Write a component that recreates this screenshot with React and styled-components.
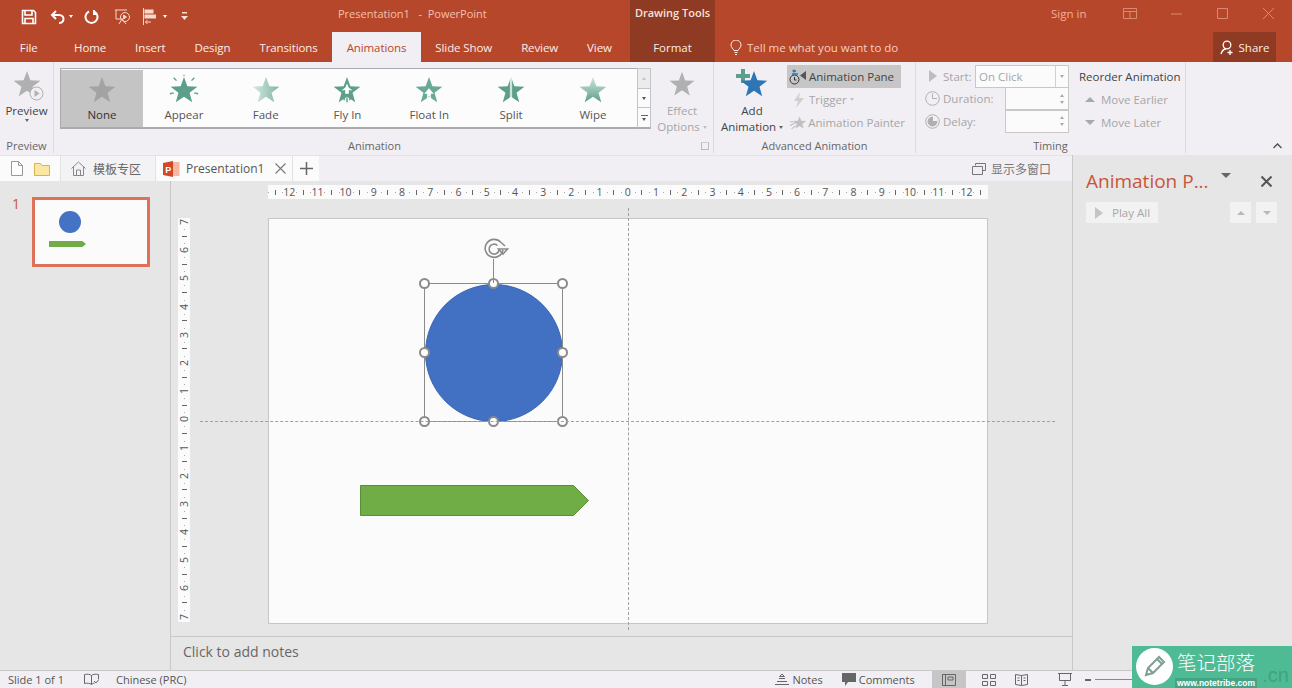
import React from 'react';
import styled, { createGlobalStyle } from 'styled-components';

const GlobalStyle = createGlobalStyle`
  html, body {
    margin: 0;
    height: 688px;
    overflow: hidden;
    background: #e6e6e6;
    font-family: "Open Sans", "Noto Sans CJK SC", sans-serif;
    font-size: 11.5px;
    color: #444;
  }
  * { box-sizing: border-box; }
`;

// star polygon used all over the ribbon
const starPoints = (cx, cy, R, r) => {
  const pts = [];
  for (let i = 0; i < 10; i++) {
    const a = -Math.PI / 2 + (i * Math.PI) / 5;
    const d = i % 2 === 0 ? R : r;
    pts.push(`${(cx + d * Math.cos(a)).toFixed(1)},${(cy + d * Math.sin(a)).toFixed(1)}`);
  }
  return pts.join(' ');
};

const Star = ({ size = 28, fill = '#a6a6a6', children, defs }) => (
  <svg width={size} height={size} viewBox="0 0 32 32">
    {defs && <defs>{defs}</defs>}
    <polygon points={starPoints(16, 17, 15, 6.2)} fill={fill} />
    {children}
  </svg>
);

const Page = styled.div`
  width: 1292px;
  height: 688px;
  position: relative;
  overflow: hidden;
  display: flex;
  flex-direction: column;
`;

/* title bar */
const TitleBar = styled.div`
  height: 33px;
  background: #b7472a;
  display: flex;
  align-items: stretch;
  color: #f3c0ae;
  font-size: 11px;
`;
const Qat = styled.div`
  width: 338px;
  padding-left: 21px;
  display: flex;
  align-items: center;
`;
const QatIcon = styled.span`
  display: inline-flex;
  margin-left: ${(p) => p.$gap || 0}px;
`;
const TitleText = styled.div`
  display: flex;
  align-items: center;
  width: 292px;
  padding-bottom: 6px;
  white-space: pre;
`;
const ContextTitle = styled.div`
  width: 85px;
  background: #8f3a22;
  color: #f6e3db;
  font-size: 11px;
  font-weight: 600;
  text-align: center;
  padding-top: 5px;
`;
const SignIn = styled.div`
  margin-left: 336px;
  width: 40px;
  padding-top: 6px;
  font-size: 11.5px;
  color: #f0b09a;
`;
const WinButton = styled.div`
  width: 46px;
  margin-left: ${(p) => p.$ml || 0}px;
  display: flex;
  align-items: flex-start;
  justify-content: center;
  padding-top: 8px;
`;

/* tab row */
const TabRow = styled.div`
  height: 29px;
  background: #b7472a;
  display: flex;
  align-items: stretch;
  color: #fbeee9;
  font-size: 11.5px;
`;
const TabList = styled.div`
  width: 630px;
  display: flex;
  align-items: stretch;
  letter-spacing: -0.1px;
`;
const Tab = styled.div`
  padding: 0 14.5px;
  display: flex;
  align-items: center;
  justify-content: center;
  background: ${(p) => (p.$active ? '#f1eff4' : 'transparent')};
  color: ${(p) => (p.$active ? '#b7472a' : 'inherit')};
  margin-top: ${(p) => (p.$active ? -1 : 0)}px;
`;
const FileTab = styled(Tab)`
  width: 59.5px;
  padding: 0 2px 0 0;
`;
const FormatTab = styled(Tab)`
  width: 85px;
  padding: 0;
  background: #8f3a22;
`;
const TellMe = styled.div`
  margin-left: 15px;
  display: flex;
  align-items: center;
  gap: 5px;
  color: #f6cfc1;
`;
const ShareButton = styled.div`
  margin-left: auto;
  margin-right: 16px;
  width: 63px;
  margin-top: -1px;
  background: #8f3a22;
  display: flex;
  align-items: center;
  justify-content: center;
  gap: 4px;
`;

/* ribbon */
const Ribbon = styled.div`
  height: 93px;
  background: #f1eff4;
  display: flex;
  position: relative;
`;
const Group = styled.div`
  width: ${(p) => p.$w}px;
  display: flex;
  flex-direction: column;
  border-right: 1px solid #dcdae0;
  margin-bottom: 2px;
`;
const GroupBody = styled.div`
  flex: 1;
  display: flex;
  min-height: 0;
`;
const GroupLabel = styled.div`
  height: 15px;
  line-height: 15px;
  text-align: center;
  font-size: 11px;
  color: #666;
  position: relative;
  padding-right: ${(p) => p.$pr || 0}px;
`;
const Launcher = styled.span`
  position: absolute;
  right: 4px;
  top: 4px;
  width: 8px;
  height: 8px;
  border: 1px solid #bbb;
  border-top-color: #ccc;
`;
const BigButton = styled.div`
  width: ${(p) => p.$w}px;
  flex: none;
  display: flex;
  flex-direction: column;
  align-items: center;
  line-height: 16px;
  padding-top: 6px;
  color: ${(p) => (p.$disabled ? '#a6a6a6' : '#444')};
  position: relative;
`;
const BigIcon = styled.div`
  height: 32px;
  display: flex;
  align-items: center;
  justify-content: center;
  position: relative;
  margin-bottom: 3px;
`;
const PlayBadge = styled.svg`
  position: absolute;
  right: -2px;
  bottom: -1px;
`;
const Caret = styled.span`
  display: inline-block;
  width: 0;
  height: 0;
  border-left: 2.5px solid transparent;
  border-right: 2.5px solid transparent;
  border-top: 3px solid ${(p) => p.$c || '#666'};
  vertical-align: middle;
  margin-left: ${(p) => p.$ml ?? 3}px;
`;
const Gallery = styled.div`
  margin: 6px 0 0 6px;
  width: 577px;
  height: 61px;
  background: #fcfcfc;
  border: 1px solid #ababab;
  border-bottom-width: 2px;
  border-right: none;
  display: flex;
`;
const GalleryItem = styled.div`
  width: ${(p) => (p.$active ? 82 : 81.8)}px;
  height: 57px;
  margin-top: 1px;
  background: ${(p) => (p.$active ? '#c4c4c4' : 'transparent')};
  color: ${(p) => (p.$active ? '#333' : '#555')};
  display: flex;
  flex-direction: column;
  align-items: center;
  padding-top: 5px;
  line-height: 15px;
  svg { margin-bottom: 2px; }
`;
const ScrollCol = styled.div`
  margin-top: 6px;
  width: 14px;
  height: 61px;
  display: flex;
  flex-direction: column;
  border: 1px solid #c4c4c4;
  border-bottom: 2px solid #ababab;
  background: #fbfbfb;
`;
const ScrollBtn = styled.div`
  flex: 1;
  display: flex;
  flex-direction: column;
  align-items: center;
  justify-content: center;
  gap: 2px;
  background: ${(p) => (p.$off ? '#ececec' : '#fbfbfb')};
  border-bottom: ${(p) => (p.$line ? '1px solid #c4c4c4' : 'none')};
`;
const ScrollBar = styled.span`
  width: 7px;
  height: 1px;
  background: #666;
`;
const SmallCol = styled.div`
  width: 118px;
  margin-left: -3px;
  padding-top: 3px;
  display: flex;
  flex-direction: column;
`;
const SmallBtn = styled.div`
  height: 23px;
  width: ${(p) => (p.$on ? 114 : 118)}px;
  display: flex;
  align-items: center;
  gap: 1px;
  padding-left: 2px;
  white-space: nowrap;
  background: ${(p) => (p.$on ? '#c6c6c6' : 'transparent')};
  color: ${(p) => (p.$on ? '#444' : '#a6a6a6')};
`;
const SmallIcon = styled.span`
  width: 19px;
  display: inline-flex;
  justify-content: center;
`;
const TimingCol = styled.div`
  width: 153px;
  padding: 3px 0 0 6px;
`;
const TimingRow = styled.div`
  height: 22.5px;
  display: flex;
  align-items: center;
  color: #a6a6a6;
  position: relative;
`;
const TimingIcon = styled.span`
  width: 21px;
  display: inline-flex;
  justify-content: center;
`;
const TimingText = styled.span`
  width: ${(p) => p.$w}px;
`;
const FieldBox = styled.div`
  width: ${(p) => p.$w}px;
  height: 23px;
  background: #fbfbfb;
  border: 1px solid #c8c8c8;
  display: flex;
  align-items: center;
  justify-content: space-between;
  padding-left: 3px;
`;
const FieldEnd = styled.span`
  width: 13px;
  align-self: stretch;
  border-left: ${(p) => (p.$plain ? 'none' : '1px solid #d0d0d0')};
  display: flex;
  flex-direction: column;
  align-items: center;
  justify-content: center;
  gap: 4px;
`;
const CaretUp = styled.span`
  width: 0;
  height: 0;
  border-left: ${(p) => p.$s || 2.5}px solid transparent;
  border-right: ${(p) => p.$s || 2.5}px solid transparent;
  border-bottom: ${(p) => p.$s || 3}px solid ${(p) => p.$c || '#aaa'};
`;
const CaretDown = styled(CaretUp)`
  border-bottom: none;
  border-top: ${(p) => p.$s || 3}px solid ${(p) => p.$c || '#aaa'};
`;
const ReorderCol = styled.div`
  padding: 3px 0 0 10px;
  flex: 1;
`;
const ReorderTitle = styled.div`
  height: 23px;
  line-height: 23px;
  color: #444;
  white-space: nowrap;
`;
const ReorderRow = styled.div`
  height: 23px;
  display: flex;
  align-items: center;
  gap: 6px;
  padding-left: 6px;
  color: #a6a6a6;
`;
const Collapse = styled.svg`
  position: absolute;
  right: 10px;
  top: 81px;
`;

/* lower part */
const Lower = styled.div`
  flex: 1;
  display: flex;
  min-height: 0;
`;
const Workspace = styled.div`
  width: 1072px;
  display: flex;
  flex-direction: column;
`;
const DocBar = styled.div`
  height: 26px;
  background: #f1eff4;
  border-top: 1px solid #e4e4e4;
  display: flex;
  align-items: stretch;
`;
const DocTools = styled.div`
  width: 60px;
  background: #fbfbfb;
  display: flex;
  align-items: center;
  gap: 11px;
  padding-left: 11px;
`;
const DocTab = styled.div`
  width: ${(p) => p.$w}px;
  display: flex;
  align-items: center;
  background: ${(p) => (p.$current ? '#fbfbfb' : '#f3f2f5')};
  border-left: 1px solid #e2e2e2;
  color: ${(p) => (p.$current ? '#555' : '#666')};
  font-size: 12px;
  padding-left: ${(p) => p.$pl || 0}px;
  gap: ${(p) => p.$g || 0}px;
  justify-content: ${(p) => (p.$center ? 'center' : 'flex-start')};
`;
const TabClose = styled.svg`
  margin-left: 5px;
`;
const MultiWindow = styled.div`
  margin-left: auto;
  margin-right: 21px;
  display: flex;
  align-items: center;
  gap: 5px;
  color: #777;
  font-size: 12px;
`;
const WorkRow = styled.div`
  flex: 1;
  display: flex;
  min-height: 0;
`;
const ThumbPane = styled.div`
  width: 171px;
  border-right: 1px solid #c8c8c8;
  display: flex;
  padding: 16px 0 0 12px;
  gap: 12px;
  align-items: flex-start;
`;
const ThumbNumber = styled.div`
  font-size: 14px;
  line-height: 14px;
  color: #c8553a;
`;
const Thumb = styled.div`
  width: 118px;
  height: 70px;
  background: #fbfbfb;
  border: 3px solid #dd7159;
  position: relative;
`;
const ThumbCircle = styled.div`
  position: absolute;
  left: 24px;
  top: 11px;
  width: 22px;
  height: 22px;
  border-radius: 50%;
  background: #4472c4;
`;
const ThumbArrow = styled.div`
  position: absolute;
  left: 14px;
  top: 41px;
  width: 37px;
  height: 6px;
  background: #70ad47;
  clip-path: polygon(0 0, 90% 0, 100% 50%, 90% 100%, 0 100%);
`;
const Editor = styled.div`
  flex: 1;
  display: flex;
  flex-direction: column;
  position: relative;
`;
const Canvas = styled.div`
  height: 455px;
  display: grid;
  grid-template-columns: 12px 720px;
  grid-template-rows: 14px 405px;
  column-gap: 78px;
  row-gap: 19px;
  padding: 4px 0 0 7px;
`;
const HRuler = styled.div`
  grid-column: 2;
  background: #fbfbfb;
  display: flex;
  color: #555;
  font-size: 10.5px;
  line-height: 14px;
`;
const HCell = styled.span`
  width: 14.12px;
  flex: none;
  text-align: center;
  position: relative;
  white-space: nowrap;
  &::after {
    content: '';
    position: absolute;
    left: 0;
    top: 7px;
    width: 1px;
    height: 1px;
    background: #aaa;
  }
`;
const Tick = styled.i`
  display: inline-block;
  width: 1px;
  height: 5px;
  background: #666;
  vertical-align: 1px;
`;
const VRuler = styled.div`
  background: #fbfbfb;
  height: 404px;
  display: flex;
  flex-direction: column;
  overflow: hidden;
  color: #555;
  font-size: 10.5px;
`;
const VCells = styled.div`
  margin-top: -3px;
`;
const VCell = styled.div`
  height: 14.1px;
  display: flex;
  align-items: center;
  justify-content: center;
  position: relative;
  span { transform: rotate(-90deg); display: block; line-height: 12px; }
  &::after {
    content: '';
    position: absolute;
    left: 6px;
    top: 0;
    width: 1px;
    height: 1px;
    background: #aaa;
  }
`;
const VTick = styled.i`
  display: block;
  width: 5px;
  height: 1px;
  background: #666;
`;
const Slide = styled.div`
  position: relative;
  background: #fbfbfb;
  border: 1px solid #c6c6c6;
  grid-column: 2;
  height: 406px;
`;
const Ball = styled.div`
  position: absolute;
  left: 156px;
  top: 65px;
  width: 138px;
  height: 138px;
  border-radius: 50%;
  background: #4271c3;
  border: 1px solid #3a66b2;
`;
const Selection = styled.div`
  position: absolute;
  left: 155px;
  top: 64px;
  width: 139px;
  height: 139px;
  border: 1px solid #8a8a8a;
`;
const Handle = styled.span`
  position: absolute;
  left: ${(p) => p.$x}px;
  top: ${(p) => p.$y}px;
  width: 11px;
  height: 11px;
  margin: -6px 0 0 -6px;
  border-radius: 50%;
  background: #fff;
  border: 2px solid #8a8a8a;
`;
const RotateStem = styled.div`
  position: absolute;
  left: 224px;
  top: 40px;
  width: 1px;
  height: 24px;
  background: #8a8a8a;
`;
const RotateIcon = styled.svg`
  position: absolute;
  left: 214px;
  top: 19px;
`;
const Pentagon = styled.svg`
  position: absolute;
  left: 91px;
  top: 266px;
`;
const GuideV = styled.div`
  position: absolute;
  left: 457px;
  top: 27px;
  height: 422px;
  border-left: 1px dashed #a0a0a0;
`;
const GuideH = styled.div`
  position: absolute;
  left: 29px;
  top: 240px;
  width: 855px;
  border-top: 1px dashed #a0a0a0;
`;
const Notes = styled.div`
  flex: 1;
  border-top: 1px solid #c8c8c8;
  padding: 5px 0 0 12px;
  font-size: 14px;
  line-height: 19px;
  color: #666;
`;
const AnimPane = styled.div`
  flex: 1;
  background: #e6e6e6;
  border-left: 1px solid #c8c8c8;
  padding: 11px 0 0 13px;
`;
const PaneHead = styled.div`
  height: 36px;
  display: flex;
  align-items: flex-start;
  color: #c8553a;
  font-size: 19px;
  line-height: 30px;
  white-space: nowrap;
`;
const PaneMenu = styled.span`
  margin: 10px 0 0 12px;
`;
const PaneClose = styled.svg`
  margin: 10px 0 0 30px;
`;
const PaneTools = styled.div`
  display: flex;
  align-items: center;
`;
const PlayAll = styled.div`
  width: 72px;
  height: 21px;
  background: #f2f2f2;
  color: #a6a6a6;
  display: flex;
  align-items: center;
  gap: 9px;
  padding-left: 9px;
`;
const PaneArrow = styled.div`
  width: 21px;
  height: 21px;
  background: #f2f2f2;
  display: flex;
  align-items: center;
  justify-content: center;
  margin-left: ${(p) => p.$ml}px;
`;

/* status bar */
const StatusBar = styled.div`
  height: 18px;
  background: #f1eff4;
  border-top: 1px solid #c8c8c8;
  display: flex;
  align-items: center;
  font-size: 11px;
  color: #555;
`;
const StatusItem = styled.div`
  display: flex;
  align-items: center;
  gap: ${(p) => p.$g ?? 4}px;
  margin-left: ${(p) => p.$ml || 0}px;
  white-space: nowrap;
  flex: none;
`;
const ViewBtn = styled.div`
  width: ${(p) => p.$w}px;
  height: 17px;
  margin-left: ${(p) => p.$ml || 0}px;
  display: flex;
  align-items: center;
  justify-content: center;
  background: ${(p) => (p.$on ? '#c6c6c6' : 'transparent')};
`;
const ZoomLine = styled.div`
  width: 40px;
  height: 1px;
  background: #888;
  margin-left: 4px;
`;

/* site watermark in the corner */
const Watermark = styled.div`
  position: absolute;
  right: 0;
  bottom: 0;
  width: 160px;
  height: 42px;
  background: #4fbb95;
  display: flex;
  align-items: center;
  padding-left: 4px;
  overflow: hidden;
`;
const MarkCircle = styled.div`
  width: 37px;
  height: 37px;
  border-radius: 50%;
  background: #fff;
  display: flex;
  align-items: center;
  justify-content: center;
  flex: none;
  margin-top: -2px;
`;
const MarkText = styled.div`
  color: #fff;
  display: flex;
  flex-direction: column;
  align-items: flex-start;
  font-family: "Noto Sans CJK SC", sans-serif;
  position: relative;
  z-index: 1;
  margin: 3px 0 0 2px;
`;
const MarkName = styled.div`
  font-size: 19.5px;
  line-height: 23px;
  font-weight: 300;
  margin: 0 0 5px 2px;
`;
const MarkSite = styled.div`
  font-family: "Liberation Sans", sans-serif;
  font-size: 8.5px;
  font-weight: 700;
  line-height: 10px;
  background: #47a385;
  padding: 0 2px;
`;
const MarkCn = styled.div`
  position: absolute;
  right: 3px;
  bottom: 2px;
  font-family: "Liberation Sans", sans-serif;
  font-size: 20px;
  line-height: 22px;
  color: #41a282;
`;

/* small drawings */
const stroke = { fill: 'none', stroke: '#fff', strokeWidth: 1.6 };

const SaveIcon = () => (
  <svg width="16" height="16" viewBox="0 0 16 16" {...stroke}>
    <path d="M1.500 1.500h11l2 2v11h-13z" />
    <path d="M4 1.500v4.500h7V1.500M4 14.500V9.500h8v5" />
  </svg>
);
const UndoIcon = () => (
  <svg width="16" height="14" viewBox="0 0 16 14" {...stroke} strokeWidth="2">
    <path d="M6 1 2 5l4 4M2 5h7c6 0 6 8 0 8" />
  </svg>
);
const RepeatIcon = () => (
  <svg width="15" height="15" viewBox="0 0 15 15" {...stroke} strokeWidth="2">
    <path d="M5 2.500a6 6 0 1 0 5 0M10 1v4h3.500" />
  </svg>
);
const FromStartIcon = () => (
  <svg width="18" height="18" viewBox="0 0 18 18" fill="none" stroke="#f7d8cc" strokeWidth="1">
    <path d="M1 2h12M2 2v9h7M5 16l3-5 4 5" />
    <circle cx="11" cy="9" r="4.500" />
    <path d="M9.500 7v4l3-2z" fill="#f7d8cc" />
  </svg>
);
const AlignIcon = () => (
  <svg width="14" height="17" viewBox="0 0 14 17" fill="none" stroke="#f7d8cc">
    <path d="M1.500 0v17" />
    <rect x="3" y="2" width="8" height="3" fill="#f7d8cc" />
    <rect x="3" y="7" width="11" height="3" fill="#f7d8cc" />
    <path d="M9 14H3.500M5.500 12l-2 2 2 2" />
  </svg>
);
const CustomizeIcon = () => (
  <svg width="7" height="9" viewBox="0 0 7 9" fill="#f7e0d7">
    <rect x="1" y="0" width="5" height="1.500" />
    <path d="M0 4h7L3.500 8z" />
  </svg>
);
const Bulb = () => (
  <svg width="12" height="15" viewBox="0 0 12 15" fill="none" stroke="#fbeee9">
    <path d="M4 10.500C3 8.500 1 7.500 1 5a5 5 0 0 1 10 0c0 2.500-2 3.500-3 5.500zM4.500 12.500h3M5 14.500h2" />
  </svg>
);
const ShareIcon = () => (
  <svg width="15" height="15" viewBox="0 0 15 15" fill="none" stroke="#fff" strokeWidth="1.300">
    <circle cx="7" cy="5" r="3.800" />
    <path d="M1 14c1-3 3-5 5-5M10 10v5M7.500 12.500h5" />
  </svg>
);
const GreyPlay = ({ c = '#b5b5b5', w = 8, h = 12 }) => (
  <svg width={w} height={h} viewBox="0 0 8 12"><path d="M0 0l8 6-8 6z" fill={c} /></svg>
);
const ClockIcon = ({ delay }) => (
  <svg width="15" height="15" viewBox="0 0 15 15" fill="none" stroke="#b0b0b0">
    <circle cx="7.500" cy="7.500" r="6.800" />
    {delay ? <path d="M7.500 3v4.500H12A4.500 4.500 0 1 1 7.500 3z" fill="#b0b0b0" /> : <path d="M7.500 2.500v5H12" />}
  </svg>
);
const PaneIcon = () => (
  <svg width="19" height="18" viewBox="0 0 19 18" fill="none">
    <path d="M5 1.500v3M3.500 3H7" stroke="#2e75b6" strokeWidth="1.500" />
    <circle cx="5.500" cy="11.500" r="4.500" stroke="#333" />
    <path d="M5.500 9v3h2" stroke="#333" />
    <path d="M17 3v9l-6-4.500z" fill="#555" />
    <path d="M3 6h6" stroke="#2e75b6" strokeWidth="1.500" />
  </svg>
);
const BoltIcon = () => (
  <svg width="12" height="16" viewBox="0 0 12 16"><path d="M7 0 1 9h4l-2 7 8-10H6z" fill="#d0d0d0" /></svg>
);
const PainterIcon = () => (
  <svg width="17" height="15" viewBox="0 0 32 28">
    <polygon points={starPoints(18, 15, 13, 5.500)} fill="#c0c0c0" />
    <path d="M0 20l10-6M0 13l6-1M3 26l8-6" stroke="#c0c0c0" strokeWidth="2" />
  </svg>
);

const AppearStar = () => (
  <Star size={30} fill="#5c9f8b">
    <path d="M5 3l3 3M27 3l-3 3M1 20l4-1M31 20l-4-1M16 0v1" stroke="#5c9f8b" strokeWidth="1.500" />
  </Star>
);
const FadeStar = () => (
  <Star size={30} fill="url(#fadeGrad)" defs={
    <linearGradient id="fadeGrad" x1="0" x2="1" y1="0" y2="0">
      <stop offset="0" stopColor="#d7e9e3" />
      <stop offset="1" stopColor="#7fb5a4" />
    </linearGradient>
  } />
);
const FlyStar = () => (
  <Star size={30} fill="#5c9f8b">
    <path d="M16 9l2 4.500 4 3-4-.5V20h-4v-4l-4 .5 4-3z" fill="#fff" />
    <path d="M13 23v4M16 24v5M19 23v4" stroke="#5c9f8b" strokeWidth="1.500" />
  </Star>
);
const FloatStar = () => (
  <Star size={30} fill="#6aa997">
    <path d="M16 14l5 6h-3v6h-1.500v-4h-1v4H14v-6h-3z" fill="#fff" />
  </Star>
);
const SplitStar = () => (
  <Star size={30} fill="url(#splitGrad)" defs={
    <linearGradient id="splitGrad" x1="0" x2="1" y1="0" y2="0">
      <stop offset="0" stopColor="#5c9f8b" />
      <stop offset="0.44" stopColor="#5c9f8b" />
      <stop offset="0.47" stopColor="#cfe3dc" />
      <stop offset="0.53" stopColor="#cfe3dc" />
      <stop offset="0.56" stopColor="#5c9f8b" />
      <stop offset="1" stopColor="#5c9f8b" />
    </linearGradient>
  } />
);
const WipeStar = () => (
  <Star size={30} fill="url(#wipeGrad)" defs={
    <linearGradient id="wipeGrad" x1="0" x2="0" y1="0" y2="1">
      <stop offset="0" stopColor="#d1e5de" />
      <stop offset="1" stopColor="#5c9f8b" />
    </linearGradient>
  } />
);

const gallery = [
  { name: 'None', icon: <Star size={30} fill="#a3a3a3" />, active: true },
  { name: 'Appear', icon: <AppearStar /> },
  { name: 'Fade', icon: <FadeStar /> },
  { name: 'Fly In', icon: <FlyStar /> },
  { name: 'Float In', icon: <FloatStar /> },
  { name: 'Split', icon: <SplitStar /> },
  { name: 'Wipe', icon: <WipeStar /> },
];

const tabs = ['Home', 'Insert', 'Design', 'Transitions', 'Animations', 'Slide Show', 'Review', 'View'];

// labels run 12..0..12 with a half tick between them
const hCells = [];
for (let i = 12; i >= -12; i--) {
  hCells.push(<HCell key={`t${i}`}><Tick /></HCell>);
  hCells.push(<HCell key={`n${i}`}>{Math.abs(i)}</HCell>);
}
hCells.push(<HCell key="end"><Tick /></HCell>);

const vCells = [];
for (let i = 7; i >= -7; i--) {
  vCells.push(<VCell key={`n${i}`}><span>{Math.abs(i)}</span></VCell>);
  if (i > -7) vCells.push(<VCell key={`t${i}`}><VTick /></VCell>);
}

const handles = [
  [0, 0], [69, 0], [138, 0],
  [0, 69], [138, 69],
  [0, 138], [69, 138], [138, 138],
];

export default function App() {
  return (
    <Page>
      <GlobalStyle />
      <TitleBar>
        <Qat>
          <SaveIcon />
          <QatIcon $gap={13}><UndoIcon /></QatIcon>
          <QatIcon $gap={3}><Caret $c="#fff" $ml={0} /></QatIcon>
          <QatIcon $gap={11}><RepeatIcon /></QatIcon>
          <QatIcon $gap={15}><FromStartIcon /></QatIcon>
          <QatIcon $gap={10}><AlignIcon /></QatIcon>
          <QatIcon $gap={7}><Caret $c="#fff" $ml={0} /></QatIcon>
          <QatIcon $gap={14}><CustomizeIcon /></QatIcon>
        </Qat>
        <TitleText>Presentation1   -  PowerPoint</TitleText>
        <ContextTitle>Drawing Tools</ContextTitle>
        <SignIn>Sign in</SignIn>
        <WinButton $ml={16}>
          <svg width="14" height="11" viewBox="0 0 14 11" fill="none" stroke="#d98a72"><path d="M.5.500h13v10H.5zM.5 3.500h13M7 3.500v7" /></svg>
        </WinButton>
        <WinButton>
          <svg width="11" height="11" viewBox="0 0 11 11" stroke="#d98a72"><path d="M0 6h11" /></svg>
        </WinButton>
        <WinButton>
          <svg width="11" height="11" viewBox="0 0 11 11" fill="none" stroke="#d98a72"><path d="M.5.500h10v10H.5z" /></svg>
        </WinButton>
        <WinButton>
          <svg width="11" height="11" viewBox="0 0 11 11" stroke="#d98a72"><path d="M0 0l11 11M11 0 0 11" /></svg>
        </WinButton>
      </TitleBar>

      <TabRow>
        <TabList>
          <FileTab>File</FileTab>
          {tabs.map((t) => (
            <Tab key={t} $active={t === 'Animations'}>{t}</Tab>
          ))}
        </TabList>
        <FormatTab>Format</FormatTab>
        <TellMe><Bulb />Tell me what you want to do</TellMe>
        <ShareButton><ShareIcon />Share</ShareButton>
      </TabRow>

      <Ribbon>
        <Group $w={54}>
          <GroupBody>
            <BigButton $w={53}>
              <BigIcon>
                <Star size={30} fill="#b0b0b0" />
                <PlayBadge width="15" height="15" viewBox="0 0 15 15">
                  <circle cx="7.500" cy="7.500" r="6.500" fill="#f1eff4" stroke="#b0b0b0" />
                  <path d="M5.500 4l5 3.500-5 3.500z" fill="#b0b0b0" />
                </PlayBadge>
              </BigIcon>
              Preview
              <Caret $ml={0} />
            </BigButton>
          </GroupBody>
          <GroupLabel>Preview</GroupLabel>
        </Group>

        <Group $w={660}>
          <GroupBody>
            <Gallery>
              {gallery.map((g) => (
                <GalleryItem key={g.name} $active={g.active}>
                  {g.icon}
                  {g.name}
                </GalleryItem>
              ))}
            </Gallery>
            <ScrollCol>
              <ScrollBtn $off $line><CaretUp $c="#c4c4c4" /></ScrollBtn>
              <ScrollBtn $line><CaretDown $c="#555" /></ScrollBtn>
              <ScrollBtn><ScrollBar /><CaretDown $c="#555" /></ScrollBtn>
            </ScrollCol>
            <BigButton $w={62} $disabled>
              <BigIcon><Star size={28} fill="#b0b0b0" /></BigIcon>
              Effect
              <span>Options<Caret $c="#c0c0c0" /></span>
            </BigButton>
          </GroupBody>
          <GroupLabel $pr={18}>Animation<Launcher /></GroupLabel>
        </Group>

        <Group $w={202}>
          <GroupBody>
            <BigButton $w={76}>
              <BigIcon>
                <svg width="34" height="32" viewBox="0 0 34 32">
                  <path d="M6 1h4v5h5v4h-5v5H6v-5H1V6h5z" fill="#5c9f8b" />
                  <polygon points={starPoints(19, 17, 14, 5.800)} fill="#2e75b6" />
                </svg>
              </BigIcon>
              Add
              <span>Animation<Caret /></span>
            </BigButton>
            <SmallCol>
              <SmallBtn $on><PaneIcon />Animation Pane</SmallBtn>
              <SmallBtn><SmallIcon><BoltIcon /></SmallIcon>Trigger<Caret $c="#c0c0c0" $ml={2} /></SmallBtn>
              <SmallBtn><SmallIcon><PainterIcon /></SmallIcon>Animation Painter</SmallBtn>
            </SmallCol>
          </GroupBody>
          <GroupLabel>Advanced Animation</GroupLabel>
        </Group>

        <Group $w={270}>
          <GroupBody>
            <TimingCol>
              <TimingRow>
                <TimingIcon><GreyPlay c="#bdbdbd" /></TimingIcon>
                <TimingText $w={32}>Start:</TimingText>
                <FieldBox $w={94}>On Click<FieldEnd><CaretDown $c="#aaa" /></FieldEnd></FieldBox>
              </TimingRow>
              <TimingRow>
                <TimingIcon><ClockIcon /></TimingIcon>
                <TimingText $w={62}>Duration:</TimingText>
                <FieldBox $w={64}><span /><FieldEnd $plain><CaretUp /><CaretDown /></FieldEnd></FieldBox>
              </TimingRow>
              <TimingRow>
                <TimingIcon><ClockIcon delay /></TimingIcon>
                <TimingText $w={62}>Delay:</TimingText>
                <FieldBox $w={64}><span /><FieldEnd $plain><CaretUp /><CaretDown /></FieldEnd></FieldBox>
              </TimingRow>
            </TimingCol>
            <ReorderCol>
              <ReorderTitle>Reorder Animation</ReorderTitle>
              <ReorderRow><CaretUp $s={5} $c="#a9a9a9" />Move Earlier</ReorderRow>
              <ReorderRow><CaretDown $s={5} $c="#a9a9a9" />Move Later</ReorderRow>
            </ReorderCol>
          </GroupBody>
          <GroupLabel>Timing</GroupLabel>
        </Group>
        <Collapse width="9" height="6" viewBox="0 0 9 6" fill="none" stroke="#555" strokeWidth="1.500"><path d="M.5 5l4-4 4 4" /></Collapse>
      </Ribbon>

      <Lower>
        <Workspace>
          <DocBar>
            <DocTools>
              <svg width="12" height="15" viewBox="0 0 12 15" fill="#fff" stroke="#999"><path d="M.5.500h7l4 4v10H.5zM7.500.500v4h4" /></svg>
              <svg width="16" height="14" viewBox="0 0 16 14" fill="#fbe7a1" stroke="#d9b44a"><path d="M.5 1.500h6l1.500 2h7.500v10H.5z" /></svg>
            </DocTools>
            <DocTab $w={95} $pl={10} $g={7}>
              <svg width="15" height="15" viewBox="0 0 15 15" fill="none" stroke="#888"><path d="M.5 7.500 7.500 1l7 6.500M2.500 6v8.500h10V6M5.500 14.500V9h4v5.500" /></svg>
              模板专区
            </DocTab>
            <DocTab $w={137} $current $pl={7} $g={6}>
              <svg width="17" height="16" viewBox="0 0 17 16">
                <rect x="6" y="1" width="10.500" height="14" fill="#f5b9a3" />
                <path d="M0 2 10 0v16L0 14z" fill="#d24726" />
                <text x="2.300" y="11.500" fontSize="9" fontWeight="700" fill="#fff" fontFamily="Liberation Sans">P</text>
              </svg>
              Presentation1
              <TabClose width="11" height="11" viewBox="0 0 11 11" stroke="#777" strokeWidth="1.100"><path d="M.5.500l10 10M10.500.500l-10 10" /></TabClose>
            </DocTab>
            <DocTab $w={27} $current $center>
              <svg width="13" height="13" viewBox="0 0 13 13" stroke="#666" strokeWidth="1.500"><path d="M6.500 0v13M0 6.500h13" /></svg>
            </DocTab>
            <MultiWindow>
              <svg width="14" height="12" viewBox="0 0 14 12" fill="#f1eff4" stroke="#777"><path d="M3.500 2.500V.5h10v7h-3" /><path d="M.5 3.500h10v8H.5z" /></svg>
              显示多窗口
            </MultiWindow>
          </DocBar>
          <WorkRow>
            <ThumbPane>
              <ThumbNumber>1</ThumbNumber>
              <Thumb>
                <ThumbCircle />
                <ThumbArrow />
              </Thumb>
            </ThumbPane>
            <Editor>
              <Canvas>
                <HRuler>{hCells}</HRuler>
                <VRuler><VCells>{vCells}</VCells></VRuler>
                <Slide>
                  <Pentagon width="232" height="34" viewBox="0 0 232 34">
                    <path d="M.5.500h213l15 15-15 15H.500z" fill="#70ad47" stroke="#5a8f38" />
                  </Pentagon>
                  <Ball />
                  <Selection>
                    {handles.map(([x, y]) => <Handle key={`${x}-${y}`} $x={x} $y={y} />)}
                  </Selection>
                  <RotateStem />
                  <RotateIcon width="28" height="22" viewBox="0 0 28 22" fill="none" stroke="#8a8a8a" strokeWidth="1.600">
                    <path d="M18 4.500A9 9 0 1 0 20 12" />
                    <path d="M14.500 7.500A5 5 0 1 0 16 12" />
                    <path d="M18 4.500 22 8" />
                    <path d="M15.500 11h9L20 16z" />
                  </RotateIcon>
                </Slide>
              </Canvas>
              <GuideV />
              <GuideH />
              <Notes>Click to add notes</Notes>
            </Editor>
          </WorkRow>
        </Workspace>
        <AnimPane>
          <PaneHead>
            Animation P...
            <PaneMenu><CaretDown $s={5} $c="#666" /></PaneMenu>
            <PaneClose width="11" height="11" viewBox="0 0 11 11" stroke="#555" strokeWidth="2"><path d="M.5.500l10 10M10.500.500l-10 10" /></PaneClose>
          </PaneHead>
          <PaneTools>
            <PlayAll><GreyPlay c="#c4c4c4" />Play All</PlayAll>
            <PaneArrow $ml={72}><CaretUp $s={4} $c="#b8b8b8" /></PaneArrow>
            <PaneArrow $ml={5}><CaretDown $s={4} $c="#b8b8b8" /></PaneArrow>
          </PaneTools>
        </AnimPane>
      </Lower>

      <StatusBar>
        <StatusItem $ml={8}>Slide 1 of 1</StatusItem>
        <StatusItem $ml={20}>
          <svg width="15" height="13" viewBox="0 0 15 13" fill="none" stroke="#666"><path d="M7.500 2.500C6 1 3 1 .5 1.500v9c2.500-.5 5.500-.5 7 1 1-1 2-1.200 3-1.300M7.500 2.500c1.500-1.500 4.500-1.500 7-1v5M7.500 2.500v9M10 8l2 2 2.500-3" /></svg>
        </StatusItem>
        <StatusItem $ml={17}>Chinese (PRC)</StatusItem>
        <StatusItem $ml={589} $g={3}>
          <svg width="14" height="11" viewBox="0 0 14 11" stroke="#666" fill="none"><path d="M0 10.500h14M2 7.500h10M4 4.500h6M7 0 4.500 2.500h5z" /></svg>
          Notes
        </StatusItem>
        <StatusItem $ml={19} $g={3}>
          <svg width="14" height="13" viewBox="0 0 14 13"><path d="M0 0h14v9H6l-3 4V9H0z" fill="#666" /></svg>
          Comments
        </StatusItem>
        <StatusItem $ml={17} $g={0}>
          <ViewBtn $on $w={34}>
            <svg width="14" height="12" viewBox="0 0 14 12" fill="none" stroke="#666"><path d="M.5.500h13v11H.5zM3.500.500v11M6 3h5v3H6z" /></svg>
          </ViewBtn>
          <ViewBtn $w={46}>
            <svg width="14" height="12" viewBox="0 0 14 12" fill="none" stroke="#666"><path d="M.5.500h5v4h-5zM8.500.500h5v4h-5zM.5 7.500h5v4h-5zM8.500 7.500h5v4h-5z" /></svg>
          </ViewBtn>
          <ViewBtn $w={20}>
            <svg width="13" height="12" viewBox="0 0 13 12" fill="none" stroke="#666"><path d="M.5.500l6 1 6-1v10l-6 1-6-1zM6.500 1.500v10M2.500 4h2M2.500 6.500h2M8.500 4h2M8.500 6.500h2" /></svg>
          </ViewBtn>
          <ViewBtn $w={32} $ml={17}>
            <svg width="14" height="13" viewBox="0 0 14 13" fill="none" stroke="#666"><path d="M0 .5h14M1.500.500v7h11v-7M7 7.500V12M4 12.500h6" /></svg>
          </ViewBtn>
        </StatusItem>
        <StatusItem $ml={4} $g={0}>
          <svg width="6" height="2" viewBox="0 0 6 2"><path d="M0 0h6v2H0z" fill="#666" /></svg>
          <ZoomLine />
        </StatusItem>
      </StatusBar>

      <Watermark>
        <MarkCircle>
          <svg width="24" height="24" viewBox="0 0 24 24" fill="none" stroke="#7f9f92" strokeWidth="2">
            <path d="M3 21l2-7L16 3l5 5-11 11zM5 14l5 5M14 5l5 5" />
          </svg>
        </MarkCircle>
        <MarkText>
          <MarkName>笔记部落</MarkName>
          <MarkSite>www.notetribe.com</MarkSite>
        </MarkText>
        <MarkCn>.cn</MarkCn>
      </Watermark>
    </Page>
  );
}
